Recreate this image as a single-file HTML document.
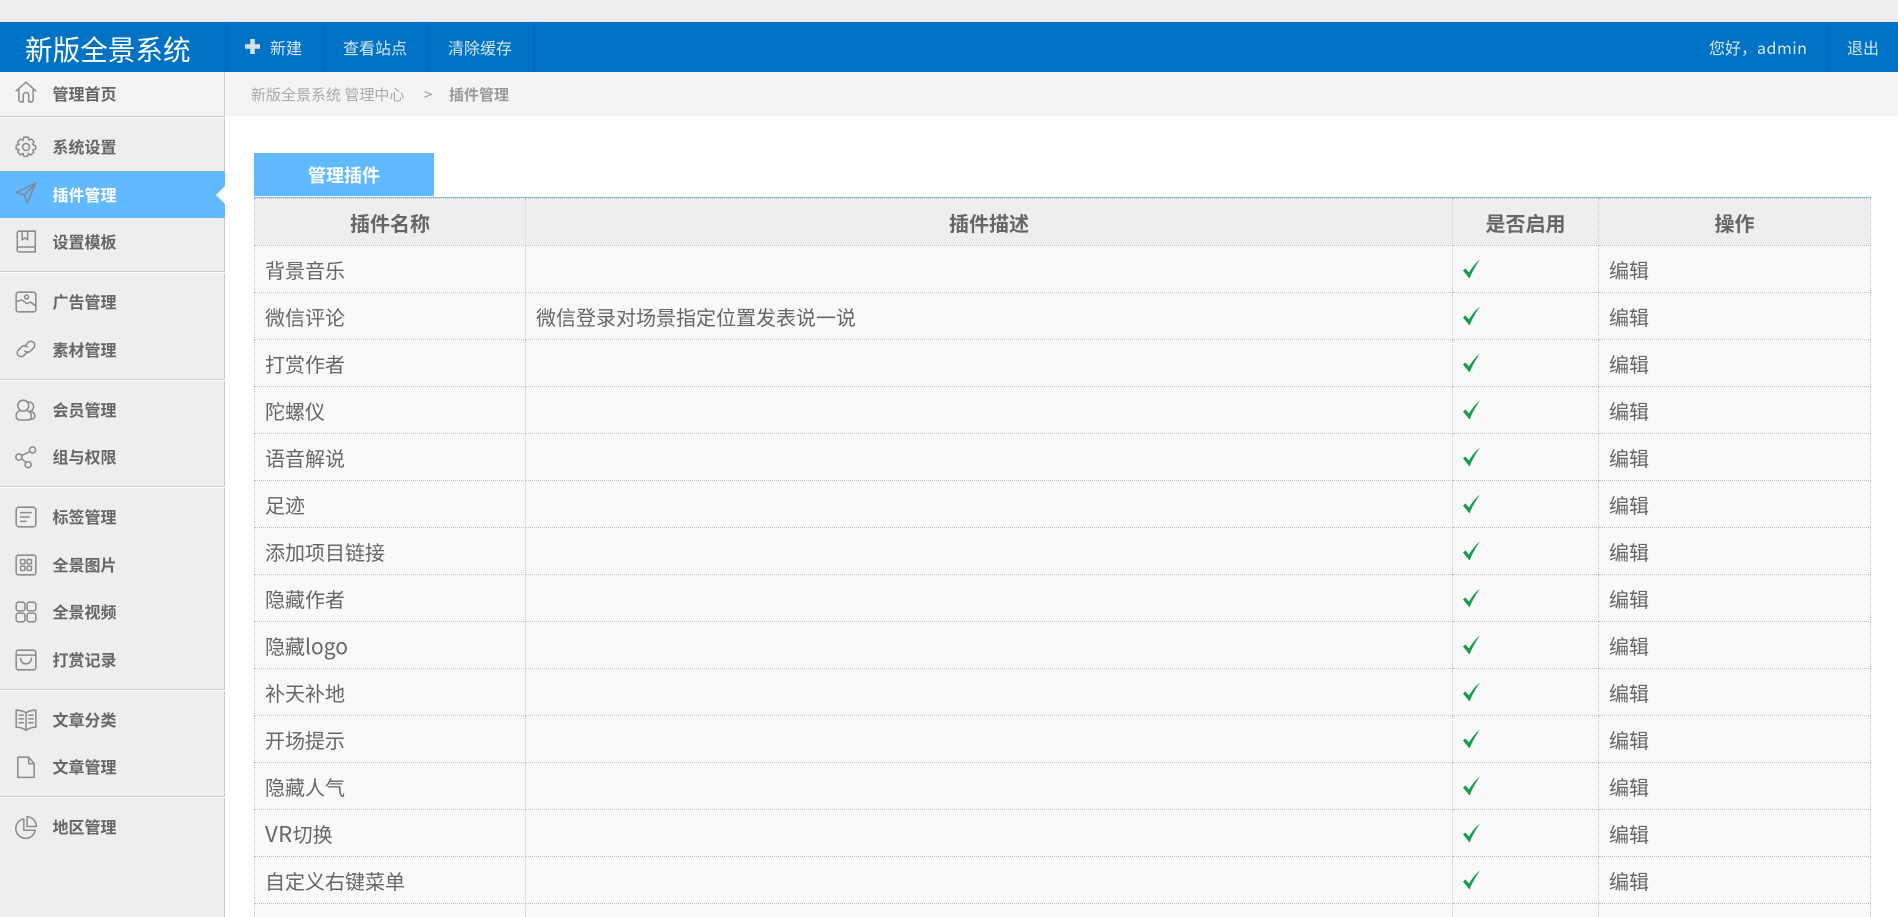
<!DOCTYPE html>
<html lang="zh"><head><meta charset="utf-8"><title>插件管理</title>
<style>
*{box-sizing:border-box}
html,body{margin:0;padding:0;width:1898px;height:917px;overflow:hidden;background:#fff}
body{position:relative;font-family:"Noto Sans CJK SC","Liberation Sans",sans-serif;color:#666}
.abs,.it,.sep,.nav,.vs{position:absolute}
#top{left:0;top:0;width:1898px;height:22px;background:#eee}
#hd{left:0;top:22px;width:1898px;height:50px;background:#0072c6}
.vs{top:22px;width:1px;height:50px;background:#0068b8}
.nav{top:22px;height:50px;line-height:50px;font-size:16px;color:#d8e8f5;white-space:nowrap}
#logo{left:25px;top:22px;height:50px;line-height:52px;font-size:27.600px;color:#fff;white-space:nowrap}
#side{left:0;top:72px;width:225px;height:845px;background:#eee;border-right:1px solid #ccc}
#first{left:0;top:72px;width:224px;height:44px;background:#f4f4f4}
.sep{left:0;width:225px;height:2px;border-top:1px solid #ccc;border-bottom:1px solid #fff}
.it{left:0;width:224px;height:47px;line-height:46px;font-size:16px;font-weight:bold;color:#666}
.it span{position:absolute;left:52.500px;top:0;white-space:nowrap}
.it svg{position:absolute;left:14px;top:11px;width:24px;height:24px;fill:none;stroke:#8c8c8c;stroke-width:1.400;stroke-linecap:round;stroke-linejoin:round}
.on{background:#61b9ff;color:#fff;width:225px}
.on svg{stroke:#7d8a96}
#tri{left:216px;top:186px;width:0;height:0;border-top:9px solid transparent;border-bottom:9px solid transparent;border-right:9px solid #fff}
#bc{left:226px;top:72px;width:1672px;height:44px;background:#f4f4f4;font-size:15px;line-height:46px;color:#aaa}
#bc span{position:absolute;top:0;white-space:nowrap}
#tab{left:254px;top:153px;width:180px;height:43px;background:#61b9ff;color:#fff;font-size:18px;font-weight:bold;text-align:center;line-height:45px}
#tl{left:254px;top:197px;width:1617px;height:1px;background:#7fbbe6}
table{position:absolute;left:254px;top:198px;width:1616px;border-collapse:collapse;table-layout:fixed;font-size:20px;color:#666}
th,td{border:1px dotted #c0c0c0;height:47px;padding:2px 0 0 10px;text-align:left;white-space:nowrap;overflow:hidden;font-weight:normal;background:#f9f9f9;line-height:44px}
th{background:#eee;font-weight:bold;text-align:center;padding:2px 0 0}
td svg{display:block;width:20px;height:20px;margin:-2px 0 0 -1px}
td svg path{fill:#169b4a}
.l{font-size:21px;line-height:1}.v{font-size:22px;letter-spacing:.5px;line-height:1}
</style></head><body>
<div class="abs" id="top"></div>
<div class="abs" id="hd"></div>
<div class="abs" id="logo">新版全景系统</div>
<div class="vs" style="left:225px"></div><div class="vs" style="left:323px"></div><div class="vs" style="left:428px"></div><div class="vs" style="left:533px"></div><div class="vs" style="left:1827px"></div>
<svg class="abs" style="left:245px;top:39px;width:15px;height:15px" viewBox="0 0 15 15"><path d="M5.200 0h4.600v5.200H15v4.600H9.800V15H5.200V9.800H0V5.200h5.200z" fill="#d8e0e6"/></svg>
<div class="nav" style="left:270px">新建</div>
<div class="nav" style="left:343px">查看站点</div>
<div class="nav" style="left:448px">清除缓存</div>
<div class="nav" style="left:1709px">您好，<span style="letter-spacing:.5px">admin</span></div>
<div class="nav" style="left:1847px">退出</div>

<div class="abs" id="side"></div>
<div class="abs" id="first"></div>
<div class="sep" style="top:116px"></div>
<div class="sep" style="top:271px"></div>
<div class="sep" style="top:379px"></div>
<div class="sep" style="top:486px"></div>
<div class="sep" style="top:689px"></div>
<div class="sep" style="top:796px"></div>

<div class="it" style="top:70px"><svg style="top:10px" viewBox="0 0 22 22"><path d="M2 10 11 2l9 8M4.500 9v9.500a1.500 1.500 0 0 0 1.500 1.500h2.500v-6a2.500 2.500 0 0 1 5 0v6H16a1.500 1.500 0 0 0 1.500-1.500V9"/></svg><span>管理首页</span></div>
<div class="it" style="top:123px"><svg style="top:12px" viewBox="0 0 22 22"><path d="M9 2h4l.7 2.600 2.300-.9 2.400 2.700-1.400 2.200L19.800 10v3l-2.600.7.900 2.300-2.700 2.400-2.200-1.400-.7 2.600H9l-.7-2.600-2.300 1.300-2.700-2.700 1.300-2.200L2 13V9.500l2.600-.7-1.300-2.300L6 3.800l2.300 1z"/><circle cx="11" cy="11" r="3.200"/></svg><span>系统设置</span></div>
<div class="it on" style="top:171px"><svg style="top:10px" viewBox="0 0 22 22"><path d="M20 2 2 10.500l7.500 2.200L12 20.500zM9.500 12.700 20 2"/></svg><span>插件管理</span></div>
<div class="abs" id="tri"></div>
<div class="it" style="top:218px"><svg viewBox="0 0 22 22"><path d="M3 18V3.500A1.500 1.500 0 0 1 4.500 2h15v19H4.500A1.500 1.500 0 0 1 3 19.500 2 2 0 0 1 4.500 16.500H19.500M7.500 2v8l2.500-2 2.500 2V2"/></svg><span>设置模板</span></div>

<div class="it" style="top:278px"><svg style="top:12px" viewBox="0 0 22 22"><rect x="2" y="2" width="18" height="18" rx="2"/><circle cx="11.500" cy="6.500" r="1.800"/><path d="M3 10.500l4-1.500 5 3.500 3-1.500 4 3"/></svg><span>广告管理</span></div>
<div class="it" style="top:326px"><svg viewBox="0 0 22 22"><path d="M9.500 8.500 13 5a3.500 3.500 0 0 1 5 0 3.500 3.500 0 0 1 0 5l-3 3a3.500 3.500 0 0 1-5 0M12.500 13.500 9 17a3.500 3.500 0 0 1-5 0 3.500 3.500 0 0 1 0-5l3-3a3.500 3.500 0 0 1 5 0"/></svg><span>素材管理</span></div>

<div class="it" style="top:386px"><svg style="top:12px" viewBox="0 0 22 22"><circle cx="8.500" cy="7" r="5"/><path d="M13 3.500a4.500 4.500 0 0 1 5 4.500 4.500 4.500 0 0 1-3 4c3 1 4.500 3 4 5.500-.5 1.500-2 2-4 2M5.500 11.500C3 12.500 1.800 14.500 2 17c.2 2 1.500 3.200 4 3.200h6c2.500 0 4-1.200 4-3.200 0-2.500-1.500-4.500-4-5.500"/></svg><span>会员管理</span></div>
<div class="it" style="top:433px"><svg style="top:12px" viewBox="0 0 22 22"><circle cx="17" cy="4.500" r="2.800"/><circle cx="4.500" cy="11" r="2.800"/><circle cx="13" cy="18" r="2.800"/><path d="M7 9.700 14.500 6M7 12.500l3.800 3.500"/></svg><span>组与权限</span></div>

<div class="it" style="top:493px"><svg style="top:12px" viewBox="0 0 22 22"><rect x="2" y="2" width="18" height="18" rx="2.500"/><path d="M6 7h10M6 11h8M6 15h5"/></svg><span>标签管理</span></div>
<div class="it" style="top:541px"><svg style="top:12px" viewBox="0 0 22 22"><rect x="2" y="2" width="18" height="18" rx="2"/><rect x="6" y="6" width="4" height="4" rx="1"/><rect x="12" y="6" width="4" height="4" rx="1"/><rect x="6" y="12" width="4" height="4" rx="1"/><rect x="12" y="12" width="4" height="4" rx="1"/></svg><span>全景图片</span></div>
<div class="it" style="top:588px"><svg style="top:12px" viewBox="0 0 22 22"><rect x="2" y="2" width="8" height="8" rx="2"/><rect x="12" y="2" width="8" height="8" rx="2"/><rect x="2" y="12" width="8" height="8" rx="2"/><rect x="12" y="12" width="8" height="8" rx="2"/></svg><span>全景视频</span></div>
<div class="it" style="top:636px"><svg style="top:12px" viewBox="0 0 22 22"><rect x="2" y="2" width="18" height="18" rx="2"/><path d="M2 6.500h18M6 9.500c.5 3.500 2.500 5 5 5s4.500-1.500 5-5"/></svg><span>打赏记录</span></div>

<div class="it" style="top:696px"><svg style="top:12px" viewBox="0 0 22 22"><path d="M11 4.500C8.500 2.500 5 2 2 2v15.500c3 0 6 .8 9 3 3-2.200 6-3 9-3V2c-3 0-6.500.5-9 2.500zM11 4.500v16M4.500 6.500h4M4.500 10h4M4.500 13.500h4M13.500 6.500h4M13.500 10h4M13.500 13.500h4"/></svg><span>文章分类</span></div>
<div class="it" style="top:743px"><svg style="top:12px" viewBox="0 0 22 22"><path d="M3.500 2h10l5 6v12.500h-15zM13.500 2v6h5"/></svg><span>文章管理</span></div>

<div class="it" style="top:803px"><svg style="top:12px" viewBox="0 0 22 22"><path d="M9 3.500a9 9 0 1 0 10.500 10.500H9zM12 1.500a9 9 0 0 1 8.500 9H12z"/></svg><span>地区管理</span></div>

<div class="abs" id="bc"><span style="left:25px">新版全景系统 管理中心</span><span style="left:198px;color:#999">&gt;</span><span style="left:223px;font-weight:bold;color:#999">插件管理</span></div>

<div class="abs" id="tab">管理插件</div>
<div class="abs" id="tl"></div>

<table>
<colgroup><col style="width:271px"><col style="width:927px"><col style="width:146px"><col style="width:272px"></colgroup>
<tr><th>插件名称</th><th>插件描述</th><th>是否启用</th><th>操作</th></tr>
<tr><td>背景音乐</td><td></td><td><svg viewBox="0 0 20 20"><path d="M1 11.500 3.300 9.500 7 13.500C10 8.500 13.500 4 18 .5 14.500 5.500 11 11 7.500 19.500z"/></svg></td><td>编辑</td></tr>
<tr><td>微信评论</td><td>微信登录对场景指定位置发表说一说</td><td><svg viewBox="0 0 20 20"><path d="M1 11.500 3.300 9.500 7 13.500C10 8.500 13.500 4 18 .5 14.500 5.500 11 11 7.500 19.500z"/></svg></td><td>编辑</td></tr>
<tr><td>打赏作者</td><td></td><td><svg viewBox="0 0 20 20"><path d="M1 11.500 3.300 9.500 7 13.500C10 8.500 13.500 4 18 .5 14.500 5.500 11 11 7.500 19.500z"/></svg></td><td>编辑</td></tr>
<tr><td>陀螺仪</td><td></td><td><svg viewBox="0 0 20 20"><path d="M1 11.500 3.300 9.500 7 13.500C10 8.500 13.500 4 18 .5 14.500 5.500 11 11 7.500 19.500z"/></svg></td><td>编辑</td></tr>
<tr><td>语音解说</td><td></td><td><svg viewBox="0 0 20 20"><path d="M1 11.500 3.300 9.500 7 13.500C10 8.500 13.500 4 18 .5 14.500 5.500 11 11 7.500 19.500z"/></svg></td><td>编辑</td></tr>
<tr><td>足迹</td><td></td><td><svg viewBox="0 0 20 20"><path d="M1 11.500 3.300 9.500 7 13.500C10 8.500 13.500 4 18 .5 14.500 5.500 11 11 7.500 19.500z"/></svg></td><td>编辑</td></tr>
<tr><td>添加项目链接</td><td></td><td><svg viewBox="0 0 20 20"><path d="M1 11.500 3.300 9.500 7 13.500C10 8.500 13.500 4 18 .5 14.500 5.500 11 11 7.500 19.500z"/></svg></td><td>编辑</td></tr>
<tr><td>隐藏作者</td><td></td><td><svg viewBox="0 0 20 20"><path d="M1 11.500 3.300 9.500 7 13.500C10 8.500 13.500 4 18 .5 14.500 5.500 11 11 7.500 19.500z"/></svg></td><td>编辑</td></tr>
<tr><td>隐藏<span class="l">logo</span></td><td></td><td><svg viewBox="0 0 20 20"><path d="M1 11.500 3.300 9.500 7 13.500C10 8.500 13.500 4 18 .5 14.500 5.500 11 11 7.500 19.500z"/></svg></td><td>编辑</td></tr>
<tr><td>补天补地</td><td></td><td><svg viewBox="0 0 20 20"><path d="M1 11.500 3.300 9.500 7 13.500C10 8.500 13.500 4 18 .5 14.500 5.500 11 11 7.500 19.500z"/></svg></td><td>编辑</td></tr>
<tr><td>开场提示</td><td></td><td><svg viewBox="0 0 20 20"><path d="M1 11.500 3.300 9.500 7 13.500C10 8.500 13.500 4 18 .5 14.500 5.500 11 11 7.500 19.500z"/></svg></td><td>编辑</td></tr>
<tr><td>隐藏人气</td><td></td><td><svg viewBox="0 0 20 20"><path d="M1 11.500 3.300 9.500 7 13.500C10 8.500 13.500 4 18 .5 14.500 5.500 11 11 7.500 19.500z"/></svg></td><td>编辑</td></tr>
<tr><td><span class="v">VR</span>切换</td><td></td><td><svg viewBox="0 0 20 20"><path d="M1 11.500 3.300 9.500 7 13.500C10 8.500 13.500 4 18 .5 14.500 5.500 11 11 7.500 19.500z"/></svg></td><td>编辑</td></tr>
<tr><td>自定义右键菜单</td><td></td><td><svg viewBox="0 0 20 20"><path d="M1 11.500 3.300 9.500 7 13.500C10 8.500 13.500 4 18 .5 14.500 5.500 11 11 7.500 19.500z"/></svg></td><td>编辑</td></tr>
<tr><td></td><td></td><td></td><td></td></tr>
</table>
</body></html>
